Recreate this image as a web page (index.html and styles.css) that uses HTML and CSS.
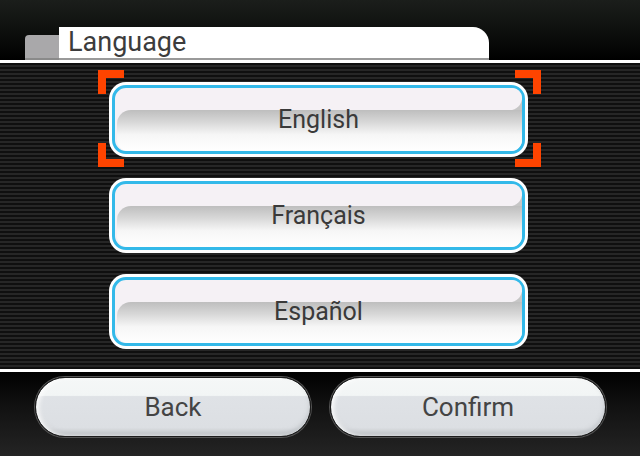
FILE: index.html
```html
<!DOCTYPE html>
<html lang="en">
<head>
    <meta charset="UTF-8">
    <meta name="viewport" content="width=device-width, initial-scale=1.0">
    <title>Language</title>
    <link rel="stylesheet" href="styles.css">
</head>
<body>
    <div class="screen">
        <div class="top-bar">
            <div class="tab-back"></div>
            <div class="tab">Language</div>
        </div>
        <div class="rule"></div>

        <div class="choices">
            <button class="choice selected">
                <span class="label">English</span>
                <span class="cursor">
                    <i class="tl"></i><i class="tr"></i><i class="bl"></i><i class="br"></i>
                </span>
            </button>
            <button class="choice"><span class="label">Français</span></button>
            <button class="choice"><span class="label">Español</span></button>
        </div>

        <div class="rule"></div>
        <div class="bottom-bar">
            <button class="pill">Back</button>
            <button class="pill">Confirm</button>
        </div>
    </div>
</body>
</html>
```

FILE: styles.css
```css
body {
    margin: 0;
    background: #000;
    font-family: Roboto, "Liberation Sans", sans-serif;
}

.screen {
    width: 640px;
    height: 456px;
    overflow: hidden;
    display: flex;
    flex-direction: column;
}

/* header with tabs */
.top-bar {
    height: 60px;
    background: linear-gradient(#1b1e1b, #0e100e 50%, #000);
    display: flex;
    align-items: flex-end;
    padding-left: 25px;
    box-sizing: border-box;
}

.tab-back {
    width: 34px;
    height: 25px;
    background: #a9a8aa;
    border-radius: 4px 0 0 0;
    border-bottom: 2px solid #8a8a8a;
    box-sizing: border-box;
}

.tab {
    width: 430px;
    height: 33px;
    background: #fff;
    border-radius: 0 16px 0 0;
    border-bottom: 2px solid #999;
    box-sizing: border-box;
    color: #3c3c3c;
    font-size: 27px;
    line-height: 31px;
    padding-left: 9px;
}

.rule {
    height: 3px;
    background: #fff;
    flex: none;
}

/* striped list area */
.choices {
    height: 306px;
    box-sizing: border-box;
    padding: 22px 0 0 112px;
    display: flex;
    flex-direction: column;
    gap: 27px;
    background: repeating-linear-gradient(#0f0f0f 0 2px, #262626 2px 4px);
}

.choice {
    position: relative;
    width: 413px;
    height: 69px;
    padding: 0;
    border: 3px solid #33b9e9;
    border-radius: 14px;
    box-shadow: 0 0 0 3px #fff;
    background: linear-gradient(#c6c6c6, #c6c6c6) right 0 top 12px / 30px 12px no-repeat, #f5f1f5;
    font-family: inherit;
    cursor: pointer;
}

/* grey lower band */
.choice::after {
    content: "";
    position: absolute;
    left: 2px;
    right: 0;
    top: 22px;
    bottom: 0;
    border-radius: 14px 0 11px 11px;
    background: linear-gradient(#bebebe, #d8d8d8 30%, #f6f6f6 60%, #fff);
}

/* rounded end of the top highlight */
.choice::before {
    content: "";
    position: absolute;
    right: 0;
    top: 0;
    width: 30px;
    height: 22px;
    border-radius: 0 11px 14px 0;
    background: #f5f1f5;
    z-index: 1;
}

.label {
    position: relative;
    z-index: 2;
    font-size: 25px;
    color: #3a3a3a;
}

/* orange selection brackets */
.cursor {
    position: absolute;
    left: -17px;
    right: -19px;
    top: -18px;
    bottom: -16px;
    z-index: 3;
}

.cursor i {
    position: absolute;
    width: 26px;
    height: 24px;
    border: 0 solid #ff4400;
    box-sizing: border-box;
}

.cursor .tl { left: 0; top: 0; border-width: 8px 0 0 8px; }
.cursor .tr { right: 0; top: 0; border-width: 8px 8px 0 0; }
.cursor .bl { left: 0; bottom: 0; border-width: 0 0 8px 8px; }
.cursor .br { right: 0; bottom: 0; border-width: 0 8px 8px 0; }

/* bottom buttons */
.bottom-bar {
    flex: 1;
    background: linear-gradient(#000, #111 40%, #242424);
    display: flex;
    gap: 19px;
    padding: 5px 0 0 35px;
}

.pill {
    width: 276px;
    height: 60px;
    border: 1px solid #1c1c1c;
    border-radius: 30px;
    background: linear-gradient(#f5f7f7 0, #f2f5f5 30%, #dfe2e6 32%, #dcdfe3 85%, #c9ccd0);
    box-shadow: inset 3px 0 4px rgba(255, 255, 255, 0.9), inset 0 -3px 4px rgba(160, 165, 170, 0.5), 0 0 0 1px #555;
    font-family: inherit;
    font-size: 26px;
    color: #444;
    cursor: pointer;
}
```
